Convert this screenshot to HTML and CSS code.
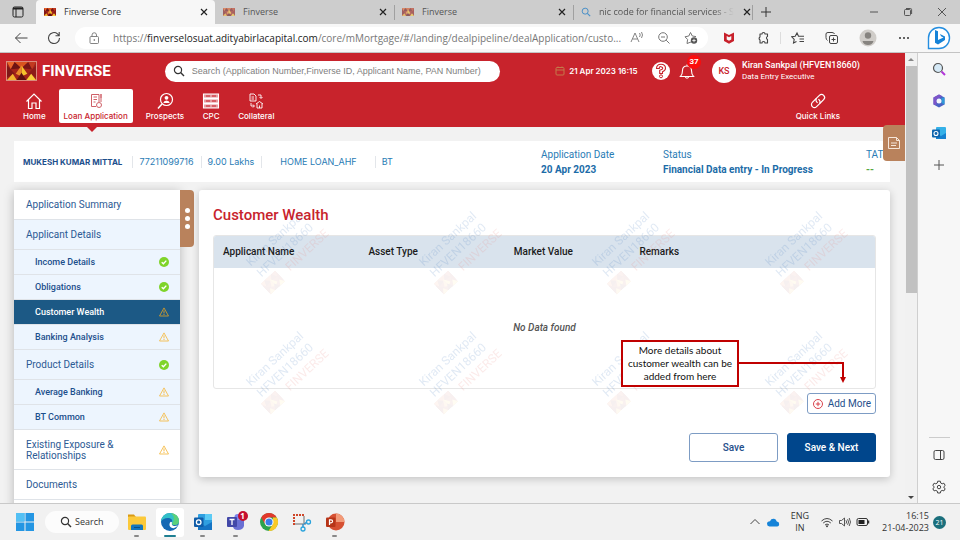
FILE: index.html
```html
<!DOCTYPE html>
<html lang="en">
<head>
<meta charset="utf-8">
<title>Finverse Core</title>
<link rel="stylesheet" href="styles.css">
</head>
<body>
<svg class="defs" aria-hidden="true">
  <symbol id="logo" viewBox="0 0 30 20" preserveAspectRatio="none">
    <rect width="30" height="20" fill="#a3231a"/>
    <path d="M0 0L8 0L4 8Z" fill="#e8662a"/><path d="M8 0L15 7L4 8Z" fill="#6d1413"/>
    <path d="M8 0H22L15 7Z" fill="#d9541f"/><path d="M22 0L26 8L15 7Z" fill="#7a1615"/>
    <path d="M22 0H30L26 8Z" fill="#c23a20"/><path d="M15 4L21 13L15 16Z" fill="#f6c32c"/>
    <path d="M15 4L9 13L15 16Z" fill="#e98a2b"/><path d="M0 4L8 13L0 17Z" fill="#7f1717"/>
    <path d="M30 4L22 13L30 17Z" fill="#8d1b18"/><path d="M0 20L6 13L10 20Z" fill="#f3b52f"/>
    <path d="M30 20L25 13L20 20Z" fill="#f7cf3a"/><path d="M10 20L15 12L20 20Z" fill="#5c1010"/>
  </symbol>
  <symbol id="close" viewBox="0 0 10 10"><path d="M2 2L8 8M8 2L2 8" fill="none" stroke="currentColor" stroke-width="1.2"/></symbol>
  <symbol id="glass" viewBox="0 0 12 12"><circle cx="5" cy="5" r="3.6" fill="none" stroke="currentColor" stroke-width="1.2"/><path d="M7.6 7.6L11 11" stroke="currentColor" stroke-width="1.4"/></symbol>
  <symbol id="done" viewBox="0 0 10 10"><circle cx="5" cy="5" r="5" fill="#7fd42a"/><path d="M2.7 5.2L4.4 6.8L7.3 3.6" fill="none" stroke="#fff" stroke-width="1.4"/></symbol>
  <symbol id="warn" viewBox="0 0 10 10"><path d="M5 .9L9.5 9H.5Z" fill="none" stroke="currentColor" stroke-width=".9" stroke-linejoin="round"/><path d="M5 3.4V6.4M5 7V8" stroke="currentColor" stroke-width="1"/></symbol>
</svg>

<header class="tabs">
  <svg class="i12 tab-menu" viewBox="0 0 12 12"><rect x="1" y="1" width="10" height="10" rx="1.5" fill="none" stroke="#222"/><path d="M1 2.5H11" stroke="#222" stroke-width="2"/><path d="M4 3V11" stroke="#222"/></svg>
  <div class="tab tab-on"><svg class="fav"><use href="#logo"/></svg><span>Finverse Core</span><button aria-label="Close tab"><svg><use href="#close"/></svg></button></div>
  <div class="tab"><svg class="fav"><use href="#logo"/></svg><span>Finverse</span><button aria-label="Close tab"><svg><use href="#close"/></svg></button></div>
  <div class="tab"><svg class="fav"><use href="#logo"/></svg><span>Finverse</span><button aria-label="Close tab"><svg><use href="#close"/></svg></button></div>
  <div class="tab"><svg class="fav find"><use href="#glass"/></svg><span class="fade">nic code for financial services - S</span><button aria-label="Close tab"><svg><use href="#close"/></svg></button></div>
  <button class="plus" aria-label="New tab"><svg class="i12" viewBox="0 0 12 12"><path d="M6 1V11M1 6H11" stroke="#333"/></svg></button>
  <div class="win">
    <button aria-label="Minimise"><svg class="i10" viewBox="0 0 10 10"><path d="M1 5H9" stroke="#555"/></svg></button>
    <button aria-label="Restore"><svg class="i10" viewBox="0 0 10 10"><rect x="1.5" y="2.5" width="6" height="6" rx="1" fill="none" stroke="#555"/><path d="M3 1.5H7.5Q8.6 1.5 8.6 2.6V7" fill="none" stroke="#555"/></svg></button>
    <button aria-label="Close"><svg class="i10" viewBox="0 0 10 10"><path d="M1 1L9 9M9 1L1 9" stroke="#555"/></svg></button>
  </div>
</header>

<div class="toolbar">
  <button class="tool back" aria-label="Back"><svg class="i14" viewBox="0 0 14 14"><path d="M13.500 7H1.500M6.500 2L1.500 7L6.500 12" fill="none" stroke="#444"/></svg></button>
  <button class="tool reload" aria-label="Reload"><svg class="i14" viewBox="0 0 14 14"><path d="M12.500 7A5.500 5.500 0 1 1 10.500 2.800L12 4.500M12.200 1V4.700H8.500" fill="none" stroke="#444" stroke-width="1.100"/></svg></button>
  <div class="address">
    <svg class="i12" viewBox="0 0 12 12"><rect x="2" y="4.500" width="8.500" height="7" rx="1" fill="none" stroke="#777" stroke-width=".9"/><path d="M4 4.500V3A2.200 2.200 0 0 1 8.500 3V4.500" fill="none" stroke="#777" stroke-width=".9"/><circle cx="6.300" cy="8" r=".8" fill="#555"/></svg>
    <span class="url">https://<b>finverselosuat.adityabirlacapital.com</b>/core/mMortgage/#/landing/dealpipeline/dealApplication/custo...</span>
    <svg class="i14" viewBox="0 0 14 14"><path d="M1 11L5 2L9 11M2.500 8H7.500M9.500 2Q11 4 9.500 6M11.500 1Q13.500 4 11.500 7" fill="none" stroke="#777" stroke-width=".9"/></svg>
    <svg class="i14" viewBox="0 0 14 14"><circle cx="6" cy="6" r="4.300" fill="none" stroke="#777"/><path d="M4 6H8M9.200 9.200L12.500 12.500" stroke="#777"/></svg>
    <svg class="i14" viewBox="0 0 14 14"><path d="M7 11L3 12.500L3.600 8.500L1 5.800L4.800 5L6.500 1.500L8.300 5L12 5.600" fill="none" stroke="#666" stroke-width=".9"/><circle cx="10" cy="9.500" r="3.200" fill="#555"/><path d="M10 7.800V11.200M8.300 9.500H11.700" stroke="#fff" stroke-width=".8"/></svg>
  </div>
  <div class="tools">
    <svg class="i14" viewBox="0 0 14 14"><path d="M2 1.500L7 4L12 1.500V10L7 12.800L2 10Z" fill="#c8202b"/><path d="M4.700 5V8.400L7 9.700L9.300 8.400V5L7 6.300Z" fill="#f7f7f7"/></svg>
    <svg class="i14" viewBox="0 0 14 14"><path d="M4 3H6A1.500 1.500 0 0 1 9 3H11.500V5.500A1.600 1.600 0 0 0 11.500 8.500V12H9A1.500 1.500 0 0 0 6 12H4V9A1.700 1.700 0 0 1 4 6Z" fill="none" stroke="#444" stroke-width="1.100" stroke-linejoin="round"/></svg>
    <i></i>
    <svg class="i14" viewBox="0 0 14 14"><path d="M5.500 10.500L2.500 12L3.200 8.500L.8 5.800L4.200 5.300L6 2L7.500 5.300H13M8.500 8H13M8.500 10.500H13" fill="none" stroke="#444" stroke-width="1.100"/></svg>
    <svg class="i14" viewBox="0 0 14 14"><rect x="4.500" y="4.500" width="8" height="8" rx="1.500" fill="none" stroke="#444"/><path d="M8.500 6.500V10.500M6.500 8.500H10.500M2.500 9.500Q1 8.500 1 6.500V3Q1 1.500 3 1.500H7Q9 1.500 9.500 3" fill="none" stroke="#444"/></svg>
    <svg class="i18" viewBox="0 0 18 18"><circle cx="9" cy="9" r="8.500" fill="#d0cdc9"/><circle cx="9" cy="6.500" r="3.200" fill="#878480"/><path d="M3.500 12H14.500Q13.500 16 9 16Q4.500 16 3.500 12" fill="#878480"/></svg>
    <svg class="i14" viewBox="0 0 14 14"><circle cx="3" cy="7" r="1" fill="#333"/><circle cx="7" cy="7" r="1" fill="#333"/><circle cx="11" cy="7" r="1" fill="#333"/></svg>
    <svg class="i24 bing" viewBox="0 0 24 24"><path d="M1.500 22.500V12A10.500 10.500 0 1 1 12 22.500Z" fill="#fff" stroke="#258ee0" stroke-width="1.400"/><path d="M8 4L11 5.300V14L16.500 11.500L14 10.300L13 8L18 10.500V14L11 18.500L8 16.800Z" fill="#1683d8"/></svg>
  </div>
</div>

<div class="stage">
  <div class="page">
    <div class="masthead">
      <div class="top">
        <svg class="brand-logo"><use href="#logo"/></svg>
        <span class="brand">FINVERSE</span>
        <label class="search"><svg class="i12"><use href="#glass"/></svg><input type="text" aria-label="Search" placeholder="Search (Application Number,Finverse ID, Applicant Name, PAN Number)"></label>
        <div class="date"><svg class="i10" viewBox="0 0 10 10"><rect x="1" y="1.500" width="8" height="7.500" rx="1" fill="none" stroke="#c47a4a"/><path d="M1 4H9M3 .5V2M7 .5V2" stroke="#c47a4a"/></svg>21 Apr 2023 16:15</div>
        <button class="help" aria-label="Help"><svg class="i18" viewBox="0 0 18 18"><circle cx="9" cy="9" r="9" fill="#fff"/><path d="M4.500 6.500Q4.500 2.200 9 2.200T13.500 6.300Q13.500 8.500 10.500 9.700V11.500H7.700V8.300Q10.800 7.300 10.800 6.200T9 4.700T7.300 6.500Z" fill="none" stroke="#c8232c" stroke-width="1.100"/><circle cx="9" cy="14.300" r="1.500" fill="none" stroke="#c8232c"/></svg></button>
        <button class="bell" aria-label="Notifications"><svg class="i18" viewBox="0 0 18 18"><path d="M2.500 14.500Q4.500 12.500 4.500 8.500Q4.500 4 9 4T13.500 8.500Q13.500 12.500 15.500 14.500ZM7.300 15Q9 17.500 10.700 15M9 4V2.500" fill="none" stroke="#fff" stroke-width="1.100"/></svg><span>37</span></button>
        <span class="avatar">KS</span>
        <div class="who"><strong>Kiran Sankpal (HFVEN18660)</strong><span>Data Entry Executive</span></div>
      </div>
      <nav class="menu">
        <a href="#"><svg class="i18" viewBox="0 0 18 18"><path d="M1.500 9.500L9 2L16.500 9.500M3.500 8V16.500H7V11H11V16.500H14.500V8" fill="none" stroke="#fff" stroke-width="1.200"/></svg>Home</a>
        <a href="#" class="on"><svg class="i18" viewBox="0 0 18 18"><path d="M4.500 2.500H12V10M4.500 2.500V14.500H9M6.500 5H10M6.500 7.500H10M6.500 10H8.500M14 2V10M13 3H15M13 5H15" fill="none" stroke="#cf6068" stroke-width="1"/><circle cx="12" cy="13" r="2.500" fill="none" stroke="#cf6068"/></svg>Loan Application</a>
        <a href="#"><svg class="i18" viewBox="0 0 18 18"><circle cx="10.500" cy="7.500" r="6" fill="none" stroke="#fff" stroke-width="1.200"/><path d="M6 12L2 16.500" stroke="#fff" stroke-width="1.500"/><path d="M7.300 11Q7.700 8.500 10.500 8.500T13.700 11Z" fill="#fff"/><circle cx="10.500" cy="5.800" r="1.900" fill="#fff"/></svg>Prospects</a>
        <a href="#"><svg class="i18" viewBox="0 0 18 18"><path d="M1.500 2H16.500V6H1.500ZM1.500 7H16.500V11H1.500ZM1.500 12H16.500V16H1.500Z" fill="#e59a9e" stroke="#fff" stroke-width="1.100"/><path d="M4 4H8M10 4H14M4 9H8M10 9H14M4 14H8M10 14H14" stroke="#c8232c"/></svg>CPC</a>
        <a href="#"><svg class="i18" viewBox="0 0 18 18"><path d="M3 2H7L9 4V9H3ZM4.500 5H7M4.500 7H7M11 3H14V6M12.500 5L14 6.500L15.500 5M9 12L12.500 9.500L16 12M10 11.500V16H15V11.500M12.500 16V13.500M4 11V14H7M6 12.500L7.500 14L6 15.500" fill="none" stroke="#fff" stroke-width=".9"/></svg>Collateral</a>
        <a href="#" class="quick"><svg class="i18" viewBox="0 0 18 18"><g transform="rotate(-45 9 9)" fill="none" stroke="#fff" stroke-width="1.200"><path d="M9.500 6H4A3 3 0 0 0 4 12H8A3 3 0 0 0 10.500 8"/><path d="M8.500 12H14A3 3 0 0 0 14 6H10A3 3 0 0 0 7.500 10"/></g></svg>Quick Links</a>
      </nav>
    </div>

    <button class="notes" aria-label="Notes"><svg class="i14" viewBox="0 0 14 14"><path d="M1.500 1.500H9.500L12.500 4.500V12.500H1.500ZM9.500 1.500V4.500H12.500M4 7H10M4 9.500H9" fill="none" stroke="#f6e6da"/></svg></button>

    <section class="deal">
      <div class="facts"><strong>MUKESH KUMAR MITTAL</strong><span>77211099716</span><span>9.00 Lakhs</span><span class="wide">HOME LOAN_AHF</span><span>BT</span></div>
      <div class="pair">Application Date<strong>20 Apr 2023</strong></div>
      <div class="pair">Status<strong>Financial Data entry - In Progress</strong></div>
      <div class="pair">TAT<strong class="green">--</strong></div>
    </section>

    <div class="work">
      <aside class="side">
        <ul>
          <li><a href="#">Application Summary</a></li>
          <li class="tint"><a href="#">Applicant Details</a></li>
          <li class="sub"><a href="#">Income Details</a><svg class="i10"><use href="#done"/></svg></li>
          <li class="sub"><a href="#">Obligations</a><svg class="i10"><use href="#done"/></svg></li>
          <li class="sub sel"><a href="#">Customer Wealth</a><svg class="i10"><use href="#warn"/></svg></li>
          <li class="sub"><a href="#">Banking Analysis</a><svg class="i10"><use href="#warn"/></svg></li>
          <li class="tint"><a href="#">Product Details</a><svg class="i10"><use href="#done"/></svg></li>
          <li class="sub"><a href="#">Average Banking</a><svg class="i10"><use href="#warn"/></svg></li>
          <li class="sub"><a href="#">BT Common</a><svg class="i10"><use href="#warn"/></svg></li>
          <li class="tall"><a href="#">Existing Exposure &amp; Relationships</a><svg class="i10"><use href="#warn"/></svg></li>
          <li><a href="#">Documents</a></li>
          <li></li>
        </ul>
        <button class="grip" aria-label="Toggle menu"><i></i><i></i><i></i></button>
      </aside>

      <main class="card">
        <h1>Customer Wealth</h1>
        <div class="grid">
          <table>
            <thead><tr><th>Applicant Name</th><th>Asset Type</th><th>Market Value</th><th>Remarks</th></tr></thead>
            <tbody><tr><td colspan="4">No Data found</td></tr></tbody>
          </table>
        </div>
        <div class="row"><button class="add"><svg class="i12" viewBox="0 0 12 12"><circle cx="6" cy="6" r="4.500" fill="none" stroke="#d9434c"/><path d="M6 3.800V8.200M3.800 6H8.200" stroke="#d9434c"/></svg>Add More</button></div>
        <div class="row actions"><button class="btn">Save</button><button class="btn primary">Save &amp; Next</button></div>

        <div class="marks" aria-hidden="true">
          <div class="mark"><p>Kiran Sankpal</p><p>HFVEN18660</p><p class="m-brand"><svg><use href="#logo"/></svg>FINVERSE</p></div>
          <div class="mark"><p>Kiran Sankpal</p><p>HFVEN18660</p><p class="m-brand"><svg><use href="#logo"/></svg>FINVERSE</p></div>
          <div class="mark"><p>Kiran Sankpal</p><p>HFVEN18660</p><p class="m-brand"><svg><use href="#logo"/></svg>FINVERSE</p></div>
          <div class="mark"><p>Kiran Sankpal</p><p>HFVEN18660</p><p class="m-brand"><svg><use href="#logo"/></svg>FINVERSE</p></div>
          <div class="mark"><p>Kiran Sankpal</p><p>HFVEN18660</p><p class="m-brand"><svg><use href="#logo"/></svg>FINVERSE</p></div>
          <div class="mark"><p>Kiran Sankpal</p><p>HFVEN18660</p><p class="m-brand"><svg><use href="#logo"/></svg>FINVERSE</p></div>
          <div class="mark"><p>Kiran Sankpal</p><p>HFVEN18660</p><p class="m-brand"><svg><use href="#logo"/></svg>FINVERSE</p></div>
          <div class="mark"><p>Kiran Sankpal</p><p>HFVEN18660</p><p class="m-brand"><svg><use href="#logo"/></svg>FINVERSE</p></div>
        </div>

        <div class="callout">
          <p>More details about customer wealth can be added from here</p>
          <svg viewBox="0 0 110 48"><path d="M0 24H104V38" fill="none" stroke="#c00000" stroke-width="2"/><path d="M101 38H107L104 44Z" fill="#c00000"/></svg>
        </div>
      </main>
    </div>
  </div>

  <div class="scroll"><i class="up"></i><i class="thumb"></i><i class="down"></i></div>

  <aside class="rail">
    <svg class="i14" viewBox="0 0 14 14"><circle cx="6" cy="6" r="4.500" fill="#d5e9f6" stroke="#555" stroke-width="1.200"/><path d="M9.500 9.500L13 13" stroke="#b236d8" stroke-width="2"/></svg>
    <svg class="i14" viewBox="0 0 14 14"><path d="M7 .5L12.500 3.500V10.500L7 13.500L1.500 10.500V3.500Z" fill="#4a63c4"/><path d="M1.500 3.500L7 .5L10 2L4.500 5.500V11L1.500 10.500Z" fill="#7d55c9"/><path d="M12.500 3.500V10.500L9.500 9V4Z" fill="#2e9ad8"/><circle cx="7" cy="7" r="2.500" fill="#f4f5fb"/></svg>
    <svg class="i14" viewBox="0 0 14 14"><rect x="4" y="1" width="10" height="12" rx="1" fill="#35b1e8"/><path d="M4 7L9 10L14 7V13H4Z" fill="#1681cf"/><rect y="3.500" width="8" height="8" rx="1" fill="#0f64ad"/><circle cx="4" cy="7.500" r="2" fill="none" stroke="#fff" stroke-width="1.100"/></svg>
    <svg class="i14 more" viewBox="0 0 14 14"><path d="M7 2V12M2 7H12" stroke="#555"/></svg>
    <hr>
    <svg class="i14" viewBox="0 0 14 14"><rect x="2" y="2.500" width="10" height="9" rx="1.500" fill="none" stroke="#444"/><path d="M8.500 2.500V11.500" stroke="#444"/></svg>
    <svg class="i14" viewBox="0 0 14 14"><path d="M5.700 1.200H8.300L8.700 3L10.200 3.800L11.900 3.200L13.200 5.500L11.900 6.700V7.700L13.200 8.700L11.900 10.900L10.200 10.400L8.700 11.200L8.300 13H5.700L5.300 11.200L3.800 10.400L2.100 10.900L.8 8.700L2.100 7.600V6.600L.8 5.500L2.100 3.200L3.800 3.800L5.300 3Z" fill="none" stroke="#444"/><circle cx="7" cy="7.100" r="1.700" fill="none" stroke="#444"/></svg>
  </aside>
</div>

<footer class="taskbar">
  <svg class="i18 start" viewBox="0 0 18 18"><path d="M0 0H8.500V8.500H0ZM9.500 0H18V8.500H9.500ZM0 9.500H8.500V18H0ZM9.500 9.500H18V18H9.500Z" fill="#2496e3"/><path d="M0 0H8.500V8.500H0Z" fill="#53c0f4"/></svg>
  <button class="find-btn"><svg class="i12"><use href="#glass"/></svg>Search</button>
  <div class="apps">
    <span class="app run"><svg class="i20" viewBox="0 0 20 20"><path d="M1 2.500H7L9 5H1Z" fill="#d99a14"/><rect x="1" y="4.500" width="18" height="13.500" rx="1" fill="#fbc93a"/><path d="M4 18V14Q4 12.500 5.500 12.500H14.500Q16 12.500 16 14V18Z" fill="#1476bd"/><path d="M7 15.500H13" stroke="#0b4f86"/></svg></span>
    <span class="app cur"><svg class="i20" viewBox="0 0 20 20"><circle cx="10" cy="10" r="9" fill="#1468b4"/><path d="M1 9.500Q2 1 10.500 1Q19 2 19 9.500Q18.500 13 14.500 13Q11.500 13 11.800 11Q13.500 7 9 6Q3.500 5.500 1 9.500" fill="#32bfc8"/><path d="M11 1Q19 2 19 9.500Q18.500 13 14.500 13Q12 13 12.300 11Q16 6 11 1" fill="#5bd07a"/><path d="M12 10.500Q11 13.800 14.500 14Q16.500 14 18 13Q15 18 11 15.500Q8.500 13.500 10 10.500Q11 9 12 10.500" fill="#fff"/></svg></span>
    <span class="app run"><svg class="i20" viewBox="0 0 20 20"><rect x="5" y="2" width="14" height="16" rx="1" fill="#2f9fe0"/><path d="M12 2H19V8H12Z" fill="#5ccbf5"/><path d="M5 10L12 14L19 10V18H5Z" fill="#1574c4"/><rect x="1" y="5.500" width="9.500" height="9.500" rx="1" fill="#0f5ca8"/><circle cx="5.700" cy="10.200" r="2.300" fill="none" stroke="#fff" stroke-width="1.300"/></svg></span>
    <span class="app run"><svg class="i20" viewBox="0 0 20 20"><circle cx="11.500" cy="5" r="3" fill="#7b83eb"/><path d="M7 8H18V14Q17 18 12 18T7 14Z" fill="#6a70d4"/><rect x="1" y="5" width="10" height="10" rx="1" fill="#4248a8"/><path d="M3.500 7.500H8.500M6 7.500V13" stroke="#fff" stroke-width="1.300"/></svg><b>1</b></span>
    <span class="app"><svg class="i20" viewBox="0 0 20 20"><circle cx="10" cy="10" r="9" fill="#2ca24c"/><path d="M2.200 5.500A9 9 0 0 1 17.800 5.500H10L6 12Z" fill="#e2382c"/><path d="M17.800 5.500A9 9 0 0 1 9.500 19L14 12V5.500Z" fill="#fbc926"/><circle cx="10" cy="10" r="4.500" fill="#fff"/><circle cx="10" cy="10" r="3.500" fill="#3b7ee8"/></svg></span>
    <span class="app"><svg class="i20" viewBox="0 0 20 20"><path d="M2 13V3H12" fill="none" stroke="#cf4628" stroke-width="2" stroke-dasharray="2 1"/><path d="M12 4V12M3 12H14" stroke="#999" stroke-width="1.500"/><path d="M12 12L15 10M11 12V15" stroke="#2c91cf" stroke-width="1.500"/><circle cx="16.500" cy="10" r="2" fill="none" stroke="#2ba3dc" stroke-width="1.300"/><circle cx="11" cy="17" r="2" fill="none" stroke="#2ba3dc" stroke-width="1.300"/></svg></span>
    <span class="app run"><svg class="i20" viewBox="0 0 20 20"><circle cx="11" cy="10" r="8.500" fill="#d65032"/><path d="M11 1.500A8.500 8.500 0 0 1 19.500 10H11Z" fill="#f29a78"/><rect x="1" y="5.500" width="9.500" height="9.500" rx="1" fill="#b73518"/><path d="M4.500 13V7.800H6Q7.600 7.800 7.600 9.300T6 10.800H4.500" fill="none" stroke="#fff" stroke-width="1.200"/></svg></span>
  </div>
  <div class="tray">
    <svg class="i12" viewBox="0 0 12 12"><path d="M1.500 8L6 3.500L10.500 8" fill="none" stroke="#444"/></svg>
    <svg class="i14" viewBox="0 0 14 14"><path d="M3.500 11.500Q1 11.200 1 8.800T4 6.200Q5 3.500 8 3.800Q10 4 10.800 6.500Q13.300 6.800 13.200 9.200T11 11.500Z" fill="#1583d8"/></svg>
    <div class="lang">ENG<br>IN</div>
    <svg class="i14" viewBox="0 0 14 14"><path d="M1.500 6Q7 1 12.500 6M3.200 8Q7 4.500 10.800 8M5 10Q7 8 9 10" fill="none" stroke="#444"/><circle cx="7" cy="11.300" r="1" fill="#444"/></svg>
    <svg class="i14" viewBox="0 0 14 14"><path d="M1.500 5.500H3.500L6.500 3V11L3.500 8.500H1.500ZM8 5.300Q9.200 7 8 8.700M9.600 4.200Q11.500 7 9.600 9.800M11.200 3Q13.800 7 11.200 11" fill="none" stroke="#444" stroke-width=".9"/></svg>
    <svg class="i14" viewBox="0 0 14 14"><rect x="1" y="3.500" width="10.500" height="7" rx="1.500" fill="none" stroke="#333"/><rect x="2.500" y="5" width="6" height="4" fill="#222"/><path d="M12.500 5.500V8.500" stroke="#333" stroke-width="1.500"/></svg>
    <div class="clock">16:15<br>21-04-2023</div>
    <span class="count">21</span>
  </div>
</footer>
</body>
</html>
```
FILE: styles.css
```css
* { box-sizing: border-box; }
body {
  margin: 0;
  height: 100vh;
  display: flex;
  flex-direction: column;
  overflow: hidden;
  background: #f7f7f7;
  font: 10px/12px Roboto, "Liberation Sans", sans-serif;
  color: #1f4f8b;
}
button { font: inherit; color: inherit; background: none; border: 0; padding: 0; }
a { color: inherit; text-decoration: none; }
svg { display: block; flex: none; }
p { margin: 0; }
.defs { position: absolute; width: 0; height: 0; }
.i10 { width: 10px; height: 10px; }
.i12 { width: 12px; height: 12px; }
.i14 { width: 14px; height: 14px; }
.i18 { width: 18px; height: 18px; }
.i20 { width: 20px; height: 20px; }
.i24 { width: 24px; height: 24px; }

/* Browser tabs */
.tabs {
  flex: none;
  height: 24px;
  display: flex;
  align-items: center;
  background: #cdcdcd;
  font: 9px/14px "Open Sans", sans-serif;
  color: #555;
}
.tab-menu { margin: 0 12px; }
.tab {
  flex: 0 1 179px;
  height: 24px;
  display: flex;
  align-items: center;
  gap: 8px;
  padding: 0 6px 0 8px;
  min-width: 0;
}
.tab + .tab + .tab, .plus { background: linear-gradient(#a0a0a0, #a0a0a0) 0 50% / 1px 15px no-repeat; }
.tab span { flex: 1; white-space: nowrap; }
.tab button svg { width: 10px; height: 10px; color: #222; }
.tab-on { background: #f7f7f7; color: #333; border-radius: 4px 4px 0 0; }
.fav { width: 12px; height: 8px; opacity: .6; }
.tab-on .fav { opacity: 1; }
.find { width: 10px; height: 10px; color: #4a90c8; opacity: 1; }
.fade { -webkit-mask-image: linear-gradient(90deg, #000 85%, transparent); mask-image: linear-gradient(90deg, #000 85%, transparent); }
.plus { height: 24px; padding: 0 8px; }
.win { margin-left: auto; display: flex; gap: 24px; padding-right: 13px; }

/* Address bar */
.toolbar {
  flex: none;
  height: 29px;
  display: flex;
  align-items: center;
  border-bottom: 1px solid #c4c4c4;
}
.back { margin-left: 14px; }
.reload { margin: 0 14px 0 19px; }
.address {
  flex: 1;
  min-width: 0;
  height: 22px;
  display: flex;
  align-items: center;
  gap: 13px;
  padding: 0 10px 0 13px;
  border-radius: 11px;
  background: #fff;
}
.url { flex: 1; min-width: 0; font: 10px/16px "Open Sans", sans-serif; color: #777; white-space: nowrap; }
.url b { font-weight: 400; color: #222; }
.tools { display: flex; align-items: center; gap: 20px; padding: 0 9px 0 14px; }
.tools i { width: 1px; height: 12px; margin: 0 -10px; background: #ddd; }
.tools .bing { margin-left: -4px; }

/* Page */
.stage { flex: 1; min-height: 0; display: flex; }
.page { position: relative; flex: 1; min-width: 0; overflow: hidden; background: #f2f2f2; }
.masthead { background: #c8232c; color: #fff; height: 74px; }
.top { display: flex; align-items: center; padding: 4px 45px 0 6px; height: 32px; }
.brand-logo { width: 31px; height: 20px; border: 1px solid #d98b7c; }
.brand { width: 123px; margin-left: 5px; font-weight: 700; font-size: 15px; line-height: 20px; }
.search {
  flex: 0 1 336px;
  height: 21px;
  display: flex;
  align-items: center;
  gap: 7px;
  padding-left: 8px;
  border-radius: 11px;
  background: #fff;
  color: #333;
}
.search input { flex: 1; min-width: 0; border: 0; padding: 0; background: none; outline: 0; font: 9px/14px "Liberation Sans", Arial, sans-serif; }
.search input::placeholder { color: #808080; }
.date { display: flex; align-items: center; gap: 4px; margin-left: 55px; width: 97px; font-family: Inter, sans-serif; font-size: 8px; font-weight: 600; white-space: nowrap; }
.bell { position: relative; margin: 0 16px 0 8px; }
.bell span {
  position: absolute;
  top: -7px;
  right: -5px;
  width: 14px;
  height: 14px;
  border-radius: 50%;
  background: #fb0d0d;
  font-size: 8px;
  line-height: 14px;
  font-weight: 700;
}
.avatar { width: 24px; height: 24px; border-radius: 50%; background: #fff; color: #c8232c; text-align: center; line-height: 24px; font-weight: 500; font-size: 9px; }
.who { margin-left: 6px; white-space: nowrap; }
.who strong { display: block; font-size: 9px; line-height: 11px; font-weight: 500; }
.who span { display: block; font-size: 8px; line-height: 11px; }
.menu { display: flex; align-items: flex-start; gap: 8px; padding: 4px 60px 0 18px; font-family: Inter, sans-serif; font-size: 8px; font-weight: 500; }
.menu a { display: flex; flex-direction: column; align-items: center; padding: 3px 5px; height: 34px; white-space: nowrap; }
.menu .on { position: relative; background: #fff; color: #c8232c; border-radius: 2px; }
.menu .on::after {
  content: "";
  position: absolute;
  top: 37px;
  left: 27px;
  border: 6px solid transparent;
  border-top-color: #c8232c;
  border-bottom: 0;
}
.menu .quick { margin-left: auto; }
.notes {
  position: absolute;
  z-index: 1;
  right: 0;
  top: 72px;
  width: 22px;
  height: 36px;
  display: flex;
  align-items: center;
  justify-content: center;
  border-radius: 4px 0 0 4px;
  background: #b9825c;
}

.deal {
  display: grid;
  grid-template-columns: 1fr 122px 203px 16px;
  align-items: center;
  height: 41px;
  margin: 14px 15px 8px 14px;
  padding: 0 8px 0 9px;
  background: #fff;
  color: #2a7cb5;
  white-space: nowrap;
}
.facts { display: flex; font-family: Inter, sans-serif; font-size: 9px; }
.facts strong { color: #1c4f8c; font-size: 8px; font-weight: 700; }
.facts > * { padding-right: 7px; margin-right: 6px; border-right: 1px solid #e3e6ea; }
.facts > :first-child { padding-right: 10px; }
.facts > :last-child { border: 0; }
.facts .wide { padding: 0 18px 0 12px; }
.pair strong { display: block; margin-top: 2px; font-weight: 700; color: #1c6ca8; }
.pair { line-height: 13px; }
.pair .green { color: #58a843; }

.work { display: flex; align-items: flex-start; padding: 0 15px 0 14px; gap: 5px; }
.side { display: flex; align-items: flex-start; width: 180px; flex: none; }
.side ul { flex: 1; margin: 0; padding: 0; list-style: none; background: #fff; box-shadow: 0 2px 10px rgba(0, 0, 0, .25); }
.side li {
  display: flex;
  align-items: center;
  justify-content: space-between;
  height: 30px;
  padding: 0 11px 0 12px;
  border-bottom: 1px solid #dfe3e8;
  color: #2c5a94;
}
.side .tint, .side .sub { background: #edf5fe; }
.side .sub { height: 25px; padding-left: 21px; font-weight: 500; font-size: 9px; color: #1c4f8c; }
.side .sub.sel { background: #1c5985; color: #fff; }
.side .tall { height: 40px; line-height: 11px; }
.side li svg { color: #f5bd4d; }
.side .sel svg { color: #cf9b2c; }
.grip {
  width: 14px;
  height: 57px;
  display: flex;
  flex-direction: column;
  align-items: center;
  justify-content: center;
  gap: 3px;
  border-radius: 0 4px 4px 0;
  background: #b9825c;
}
.grip i { width: 5px; height: 5px; border-radius: 50%; background: #fff; }

.card {
  position: relative;
  flex: 1;
  min-width: 0;
  padding: 15px 14px;
  border-radius: 3px;
  background: #fff;
  box-shadow: 0 2px 8px rgba(0, 0, 0, .2);
}
.card h1 { margin: 0 0 10px; font-size: 15px; line-height: 20px; font-weight: 500; color: #c8232c; }
.grid { border: 1px solid #e6e6e6; border-radius: 3px; overflow: hidden; }
.grid table { width: 100%; border-collapse: collapse; table-layout: fixed; color: #1b1b1b; }
.grid th { height: 32px; padding: 0 0 0 9px; width: 22%; background: #d9e3ed; text-align: left; font-weight: 500; }
.grid th:nth-child(3) { width: 19%; }
.grid th:last-child { width: auto; }
.grid td { height: 120px; text-align: center; font-style: italic; font-weight: 500; color: #555; }
.row { display: flex; justify-content: flex-end; gap: 9px; margin-top: 4px; }
.add { display: flex; align-items: center; gap: 4px; height: 21px; padding: 0 4px; border: 1px solid #7d9cc4; border-radius: 3px; }
.actions { margin-top: 19px; }
.btn { width: 89px; height: 29px; border: 1px solid #7d9cc4; border-radius: 3px; font-weight: 500; background: #fff; }
.primary { background: #00468c; border-color: #00468c; color: #fff; }

/* User stamp repeated over the card */
.marks {
  position: absolute;
  top: 20px;
  left: 41px;
  display: grid;
  grid-template-columns: repeat(4, 173px);
  grid-auto-rows: 120px;
  pointer-events: none;
}
.mark { width: 90px; height: 80px; padding: 18px 0; transform: rotate(-43deg); font-size: 12px; line-height: 15px; color: #4379bd; opacity: .16; white-space: nowrap; text-align: center; }
.m-brand { display: flex; gap: 10px; padding-left: 4px; color: #e8807c; }
.m-brand svg { width: 20px; height: 15px; opacity: .4; }

.callout { position: absolute; right: 41px; top: 149px; display: flex; align-items: center; }
.callout p {
  width: 118px;
  padding: 2px 3px;
  border: 2px solid #c00000;
  background: #fff;
  font: 10px/13px Lato, sans-serif;
  color: #111;
  text-align: center;
}
.callout svg { width: 110px; height: 48px; }

.scroll { width: 13px; display: flex; flex-direction: column; align-items: center; background: #f1f1f1; border-right: 1px solid #cfcfcf; }
.scroll i { border: 3px solid transparent; }
.scroll .up { margin: 5px 0; border-bottom-color: #888; border-top: 0; }
.scroll .thumb { width: 11px; height: 227px; background: #c1c1c1; border: 0; }
.scroll .down { margin: auto 0 4px; border-top-color: #444; border-bottom: 0; }

.rail { width: 42px; display: flex; flex-direction: column; align-items: center; padding: 9px 0; gap: 18px; background: #f7f7f7; }
.rail hr { width: 21px; margin: auto 0 -8px; border: 0; border-top: 1px solid #ccc; }

/* Taskbar */
.taskbar {
  flex: none;
  height: 37px;
  display: flex;
  align-items: center;
  padding: 0 14px 0 16px;
  border-top: 1px solid #c9c9c9;
  background: #f1f1f1;
  font: 9px/12px "Open Sans", sans-serif;
  color: #333;
}
.find-btn { display: flex; align-items: center; gap: 3px; height: 22px; margin-left: 11px; padding: 0 15px; border-radius: 11px; background: #fcfcfc; }
.apps { display: flex; gap: 5px; margin-left: 4px; }
.app { position: relative; width: 28px; height: 29px; display: flex; align-items: center; justify-content: center; border-radius: 3px; }
.cur { background: #fff; }
.run::after, .cur::after { content: ""; position: absolute; bottom: 0; width: 5px; height: 2px; border-radius: 1px; background: #888; }
.cur::after { width: 12px; background: #1f7f92; }
.app b { position: absolute; top: 3px; right: 2px; width: 10px; height: 10px; border-radius: 50%; background: #c50f2f; color: #fff; font-size: 8px; line-height: 10px; text-align: center; }
.tray { display: flex; align-items: center; gap: 4px; margin-left: auto; }
.tray > svg:first-child { margin-right: 1px; }
.lang { width: 32px; text-align: center; }
.clock { width: 55px; text-align: right; }
.count { width: 13px; height: 13px; border-radius: 50%; background: #1b6f7c; color: #fff; font-size: 7px; line-height: 13px; text-align: center; }
```
